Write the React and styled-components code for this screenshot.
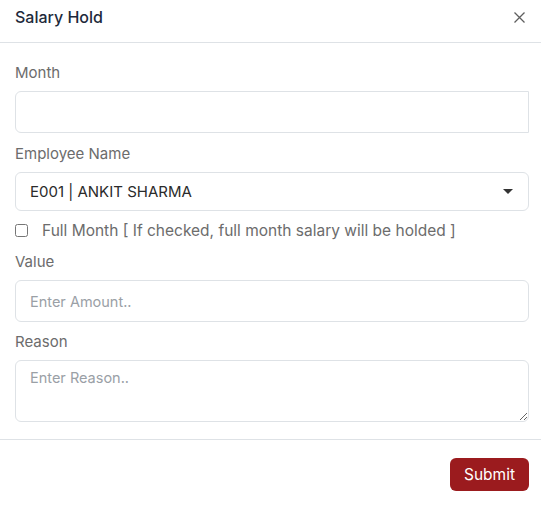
import React from 'react'
import styled, { createGlobalStyle } from 'styled-components'

const GlobalStyle = createGlobalStyle`
    * { box-sizing: border-box; }
    body {
        margin: 0;
        background: #fff;
        font-family: Inter, "Noto Sans", sans-serif;
    }
`

export default function App() {
    return (
        <Modal>
            <GlobalStyle />
            <Header>
                <Title>Salary Hold</Title>
                <CloseButton aria-label="close">
                    <svg width="11" height="11" viewBox="0 0 11 11">
                        <path d="M0.5 0.5L10.5 10.5M10.5 0.5L0.5 10.5" stroke="#5f5f5f" strokeWidth="1.3" fill="none" />
                    </svg>
                </CloseButton>
            </Header>
            <Body>
                <Field space={12}>
                    <Label>Month</Label>
                    <Input type="text" squareRight />
                </Field>
                <Field space={12}>
                    <Label>Employee Name</Label>
                    <Select>
                        <span>E001 | ANKIT SHARMA</span>
                        <Caret />
                    </Select>
                </Field>
                <CheckRow>
                    <CheckBox type="checkbox" />
                    <span>Full Month [ If checked, full month salary will be holded ]</span>
                </CheckRow>
                <Field space={11}>
                    <Label>Value</Label>
                    <Input type="text" placeholder="Enter Amount.." />
                </Field>
                <Field space={0}>
                    <Label>Reason</Label>
                    <TextArea placeholder="Enter Reason.." />
                </Field>
            </Body>
            <Footer>
                <SubmitButton>Submit</SubmitButton>
            </Footer>
        </Modal>
    )
}

const Modal = styled.div`
    width: 541px;
    background: #fff;
    display: flex;
    flex-direction: column;
`
const Header = styled.div`
    height: 43px;
    flex-shrink: 0;
    border-bottom: 1px solid #dee2e6;
    display: flex;
    align-items: center;
    justify-content: space-between;
    padding: 0 16px 8px 15px;
`
const Title = styled.h5`
    margin: 0;
    font-size: 16px;
    font-weight: 500;
    color: #1e2a3b;
`
const CloseButton = styled.button`
    border: none;
    background: none;
    padding: 0;
    display: flex;
    cursor: pointer;
`
const Body = styled.div`
    padding: 21px 12px 17px 15px;
    display: flex;
    flex-direction: column;
`
const Field = styled.div`
    display: flex;
    flex-direction: column;
    margin-bottom: ${({ space }) => space}px;
`
const Label = styled.label`
    font-size: 15px;
    color: #6c6c6c;
    margin-bottom: 9px;
    line-height: 1.2;
`
const Input = styled.input`
    height: 42px;
    border: 1px solid #dee2e6;
    border-radius: ${({ squareRight }) => squareRight ? '6px 0 0 6px' : '6px'};
    padding: 0 14px;
    font-family: inherit;
    font-size: 14.5px;
    color: #333;
    &::placeholder { color: #9aa0a6; }
`
const Select = styled.div`
    height: 39px;
    border: 1px solid #dee2e6;
    border-radius: 6px;
    padding: 0 15px 0 14px;
    display: flex;
    align-items: center;
    justify-content: space-between;
    font-size: 15px;
    color: #2b2b2b;
`
const Caret = styled.span`
    width: 0;
    height: 0;
    border-left: 5px solid transparent;
    border-right: 5px solid transparent;
    border-top: 5px solid #333;
`
const CheckRow = styled.label`
    display: flex;
    align-items: center;
    gap: 14px;
    font-size: 15.5px;
    color: #6c6c6c;
    margin: -2px 0 13px;
`
const CheckBox = styled.input`
    margin: 0;
    width: 13px;
    height: 13px;
`
const TextArea = styled.textarea`
    height: 62px;
    border: 1px solid #dee2e6;
    border-radius: 6px;
    padding: 8px 14px;
    font-family: inherit;
    font-size: 14.5px;
    resize: vertical;
    &::placeholder { color: #9aa0a6; }
`
const Footer = styled.div`
    border-top: 1px solid #dee2e6;
    display: flex;
    justify-content: flex-end;
    padding: 18px 12px;
`
const SubmitButton = styled.button`
    background: #9b1b1e;
    color: #fff;
    border: none;
    border-radius: 6px;
    height: 33px;
    padding: 0 14px;
    font-family: inherit;
    font-size: 15.5px;
`
